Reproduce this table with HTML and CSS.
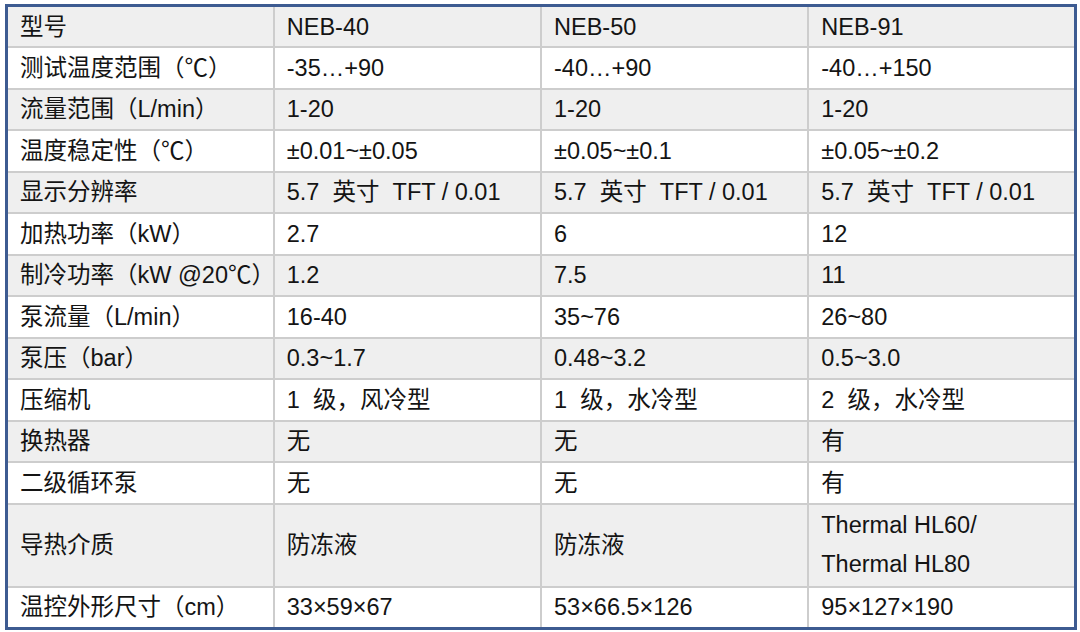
FILE: index.html
```html
<!DOCTYPE html>
<html lang="zh-CN">
<head>
<meta charset="utf-8">
<title>型号参数</title>
<link rel="stylesheet" href="styles.css">
</head>
<body>
<table class="spec">
  <tbody>
    <tr class="alt"><td>型号</td><td>NEB-40</td><td>NEB-50</td><td>NEB-91</td></tr>
    <tr><td>测试温度范围（℃）</td><td>-35…+90</td><td>-40…+90</td><td>-40…+150</td></tr>
    <tr class="alt"><td>流量范围（L/min）</td><td>1-20</td><td>1-20</td><td>1-20</td></tr>
    <tr><td>温度稳定性（℃）</td><td>±0.01~±0.05</td><td>±0.05~±0.1</td><td>±0.05~±0.2</td></tr>
    <tr class="alt"><td>显示分辨率</td><td>5.7&nbsp; 英寸&nbsp; TFT / 0.01</td><td>5.7&nbsp; 英寸&nbsp; TFT / 0.01</td><td>5.7&nbsp; 英寸&nbsp; TFT / 0.01</td></tr>
    <tr><td>加热功率（kW）</td><td>2.7</td><td>6</td><td>12</td></tr>
    <tr class="alt"><td>制冷功率（kW @20℃）</td><td>1.2</td><td>7.5</td><td>11</td></tr>
    <tr><td>泵流量（L/min）</td><td>16-40</td><td>35~76</td><td>26~80</td></tr>
    <tr class="alt"><td>泵压（bar）</td><td>0.3~1.7</td><td>0.48~3.2</td><td>0.5~3.0</td></tr>
    <tr><td>压缩机</td><td>1&nbsp; 级，风冷型</td><td>1&nbsp; 级，水冷型</td><td>2&nbsp; 级，水冷型</td></tr>
    <tr class="alt"><td>换热器</td><td>无</td><td>无</td><td>有</td></tr>
    <tr><td>二级循环泵</td><td>无</td><td>无</td><td>有</td></tr>
    <tr class="alt tall"><td>导热介质</td><td>防冻液</td><td>防冻液</td><td class="two">Thermal HL60/<br>Thermal HL80</td></tr>
    <tr><td>温控外形尺寸（cm）</td><td>33×59×67</td><td>53×66.5×126</td><td>95×127×190</td></tr>
  </tbody>
</table>
</body>
</html>
```
FILE: styles.css
```css
html, body {
  margin: 0;
  padding: 0;
  background: #ffffff;
}
body {
  padding: 4px 0 0 5px;
  font-family: "Liberation Sans", Arial, "Noto Sans CJK SC", sans-serif;
  color: #141414;
}
.spec {
  width: 1072px;
  border-collapse: collapse;
  table-layout: fixed;
  border: 3px solid #3d5b91;
  font-size: 23.5px;
}
.spec tr {
  height: 41.5px;
  background: #ffffff;
}
.spec tr.alt {
  background: #efefef;
}
.spec tr.tall {
  height: 83px;
}
.spec td {
  border: 2px solid #cdcdcd;
  padding: 0 0 0 12px;
  vertical-align: middle;
  white-space: nowrap;
  line-height: 26px;
}
.spec td.two {
  line-height: 39px;
}
```
